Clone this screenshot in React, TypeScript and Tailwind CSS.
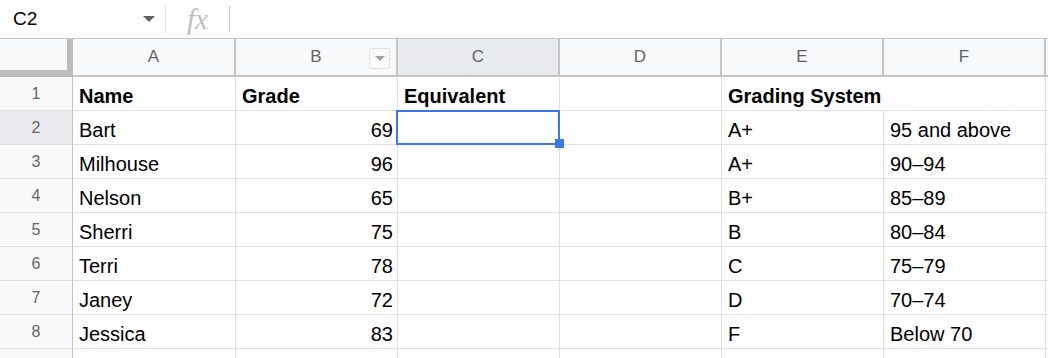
const FONT = "font-['Liberation_Sans',Arial,sans-serif]";

const COL_LETTERS = ['A', 'B', 'C', 'D', 'E', 'F', ''];
const COL_WIDTHS = ['w-[163px]', 'w-[162px]', 'w-[162px]', 'w-[162px]', 'w-[162px]', 'w-[162px]', 'w-[162px]'];

type Cell = { text?: string; bold?: boolean; right?: boolean; overflow?: boolean };

const ROWS: Cell[][] = [
  [
    { text: 'Name', bold: true },
    { text: 'Grade', bold: true },
    { text: 'Equivalent', bold: true },
    {},
    { text: 'Grading System', bold: true, overflow: true },
    {},
    {},
  ],
  [{ text: 'Bart' }, { text: '69', right: true }, {}, {}, { text: 'A+' }, { text: '95 and above' }, {}],
  [{ text: 'Milhouse' }, { text: '96', right: true }, {}, {}, { text: 'A+' }, { text: '90–94' }, {}],
  [{ text: 'Nelson' }, { text: '65', right: true }, {}, {}, { text: 'B+' }, { text: '85–89' }, {}],
  [{ text: 'Sherri' }, { text: '75', right: true }, {}, {}, { text: 'B' }, { text: '80–84' }, {}],
  [{ text: 'Terri' }, { text: '78', right: true }, {}, {}, { text: 'C' }, { text: '75–79' }, {}],
  [{ text: 'Janey' }, { text: '72', right: true }, {}, {}, { text: 'D' }, { text: '70–74' }, {}],
  [{ text: 'Jessica' }, { text: '83', right: true }, {}, {}, { text: 'F' }, { text: 'Below 70' }, {}],
  [{}, {}, {}, {}, {}, {}, {}],
];

function FormulaBar() {
  return (
    <div className="flex h-[39px] items-center border-b border-[#c4c4c4] bg-white">
      <div className="flex w-[165px] items-center justify-between pl-[13px] pr-[10px]">
        <span className="text-[19px] text-black">C2</span>
        <svg width="12" height="6" viewBox="0 0 12 6" aria-hidden>
          <path d="M0 0h12L6 6z" fill="#5f6368" />
        </svg>
      </div>
      <div className="h-[28px] w-px bg-[#e3e3e3]" />
      <span className="ml-[21px] font-['Liberation_Serif',serif] text-[29px] italic leading-none text-[#bdbdbd]">
        fx
      </span>
      <div className="ml-[21px] h-[26px] w-px bg-[#c7c7c7]" />
    </div>
  );
}

function HeaderRow() {
  return (
    <div className="flex h-[38px]">
      <div className="h-full w-[73px] shrink-0 border-r-[6px] border-b-[7px] border-[#bdbdbd] bg-[#f8f9fa]" />
      {COL_LETTERS.map((letter, i) => (
        <div
          key={i}
          className={`${COL_WIDTHS[i]} relative flex h-full shrink-0 items-center justify-center border-r-2 border-b-2 border-[#c4c4c4] text-[17px] text-[#5f6368] ${
            letter === 'C' ? 'bg-[#e8eaed]' : 'bg-[#f8f9fa]'
          }`}
        >
          {letter}
          {letter === 'B' && (
            <div className="absolute right-[6px] top-[9px] flex h-[21px] w-[21px] items-center justify-center rounded-[2px] border border-[#e3e3e3] bg-[#f8f9fa]">
              <svg width="10" height="5" viewBox="0 0 10 5" aria-hidden>
                <path d="M0 0h10L5 5z" fill="#a0a0a0" />
              </svg>
            </div>
          )}
        </div>
      ))}
    </div>
  );
}

function DataRow({ index, cells }: { index: number; cells: Cell[] }) {
  const rowSelected = index === 2;
  return (
    <div className={`flex h-[34px] ${rowSelected ? 'relative z-20' : ''}`}>
      <div
        className={`flex h-full w-[73px] shrink-0 items-center justify-center border-r border-b border-r-[#c4c4c4] border-b-[#e1e1e1] text-[16px] text-[#666666] ${
          rowSelected ? 'bg-[#e8eaed]' : 'bg-[#f8f9fa]'
        }`}
      >
        {index <= 8 ? index : ''}
      </div>
      {cells.map((cell, i) => {
        const selected = rowSelected && i === 2;
        return (
          <div
            key={i}
            className={`${COL_WIDTHS[i]} relative flex h-full shrink-0 items-end border-b border-[#e1e1e1] pb-[2px] text-[20px] leading-[23px] text-black ${
              cell.overflow ? 'z-10 border-r border-r-transparent' : 'border-r'
            } ${selected ? 'z-20' : ''} ${cell.right ? 'justify-end pr-[4px]' : 'pl-[6px]'} ${cell.bold ? 'font-bold' : ''}`}
          >
            <span className="whitespace-nowrap">{cell.text}</span>
            {selected && (
              <>
                <div className="absolute -top-px -left-[2px] -right-px -bottom-px border-2 border-[#3b78e7]" />
                <div className="absolute -right-[5px] -bottom-[4px] h-[9px] w-[9px] bg-[#3b78e7]" />
              </>
            )}
          </div>
        );
      })}
    </div>
  );
}

export default function App() {
  return (
    <div className={`${FONT} h-[358px] w-[1048px] overflow-hidden bg-white`}>
      <FormulaBar />
      <HeaderRow />
      {ROWS.map((cells, r) => (
        <DataRow key={r} index={r + 1} cells={cells} />
      ))}
    </div>
  );
}
